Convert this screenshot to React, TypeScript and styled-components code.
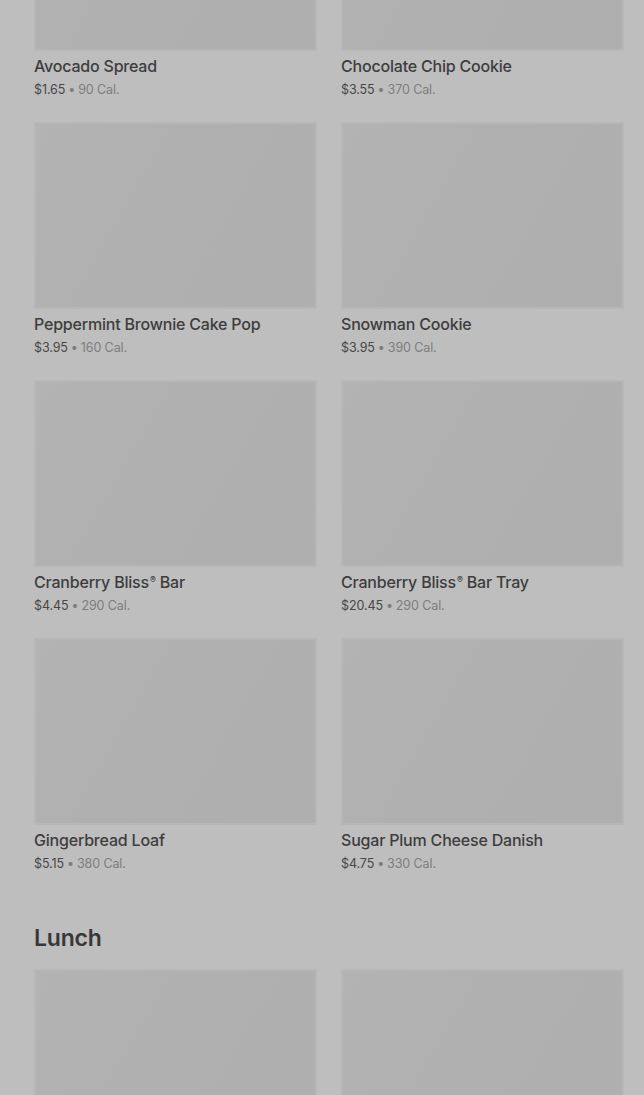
import styled, { createGlobalStyle } from "styled-components";

const GlobalStyle = createGlobalStyle`
  html, body {
    margin: 0;
    padding: 0;
    background: #bebebe;
    font-family: Inter, "Noto Sans", "Liberation Sans", sans-serif;
    overflow: hidden;
  }
`;

const Page = styled.div`
  padding: 0 20px 0 34px;
  margin-top: -136px;
`;

const Grid = styled.div`
  display: grid;
  grid-template-columns: 283px 283px;
  column-gap: 24px;
  row-gap: 23px;
`;

const Card = styled.div`
  display: flex;
  flex-direction: column;
`;

const Thumb = styled.div`
  height: 187px;
  box-sizing: border-box;
  border: 2px solid #b7b7b7;
  background: linear-gradient(120deg, #b3b3b3 0%, #b0b0b0 40%, #afafaf 100%);
`;

const Title = styled.div`
  margin-top: 5px;
  height: 20px;
  font-size: 16px;
  line-height: 20px;
  font-weight: 500;
  letter-spacing: -0.2px;
  color: #3d3d3d;
  white-space: nowrap;
`;

const Reg = styled.span`
  font-size: 0.55em;
  line-height: 0;
  vertical-align: 0.6em;
  margin-left: 1px;
`;

const Meta = styled.div`
  margin-top: 5px;
  height: 18px;
  font-size: 12.5px;
  line-height: 18px;
  letter-spacing: -0.1px;
  color: #7d7d7d;
`;

const Price = styled.span`
  color: #474747;
`;

const Dot = styled.span`
  margin: 0 3px;
`;

const Section = styled.h2`
  margin: 49px 0 15px;
  font-size: 23px;
  line-height: 32px;
  font-weight: 600;
  letter-spacing: -0.2px;
  color: #383838;
`;

type Item = { name: string; price: string; cal: number };

const bakery: Item[] = [
  { name: "Avocado Spread", price: "$1.65", cal: 90 },
  { name: "Chocolate Chip Cookie", price: "$3.55", cal: 370 },
  { name: "Peppermint Brownie Cake Pop", price: "$3.95", cal: 160 },
  { name: "Snowman Cookie", price: "$3.95", cal: 390 },
  { name: "Cranberry Bliss® Bar", price: "$4.45", cal: 290 },
  { name: "Cranberry Bliss® Bar Tray", price: "$20.45", cal: 290 },
  { name: "Gingerbread Loaf", price: "$5.15", cal: 380 },
  { name: "Sugar Plum Cheese Danish", price: "$4.75", cal: 330 },
];

const lunch: Item[] = [
  { name: "", price: "", cal: 0 },
  { name: "", price: "", cal: 0 },
];

// split out the ® so it can sit small and raised like the reference
const renderName = (name: string) =>
  name.split("®").map((part, i, arr) => (
    <span key={i}>
      {part}
      {i < arr.length - 1 && <Reg>®</Reg>}
    </span>
  ));

const ProductCard = ({ item }: { item: Item }) => (
  <Card>
    <Thumb />
    {item.name && (
      <>
        <Title>{renderName(item.name)}</Title>
        <Meta>
          <Price>{item.price}</Price>
          <Dot>•</Dot>
          {item.cal} Cal.
        </Meta>
      </>
    )}
  </Card>
);

const App = () => {
  return (
    <>
      <GlobalStyle />
      <Page>
        <Grid>
          {bakery.map((item) => (
            <ProductCard key={item.name} item={item} />
          ))}
        </Grid>
        <Section>Lunch</Section>
        <Grid>
          {lunch.map((item, i) => (
            <ProductCard key={i} item={item} />
          ))}
        </Grid>
      </Page>
    </>
  );
};

export default App;
